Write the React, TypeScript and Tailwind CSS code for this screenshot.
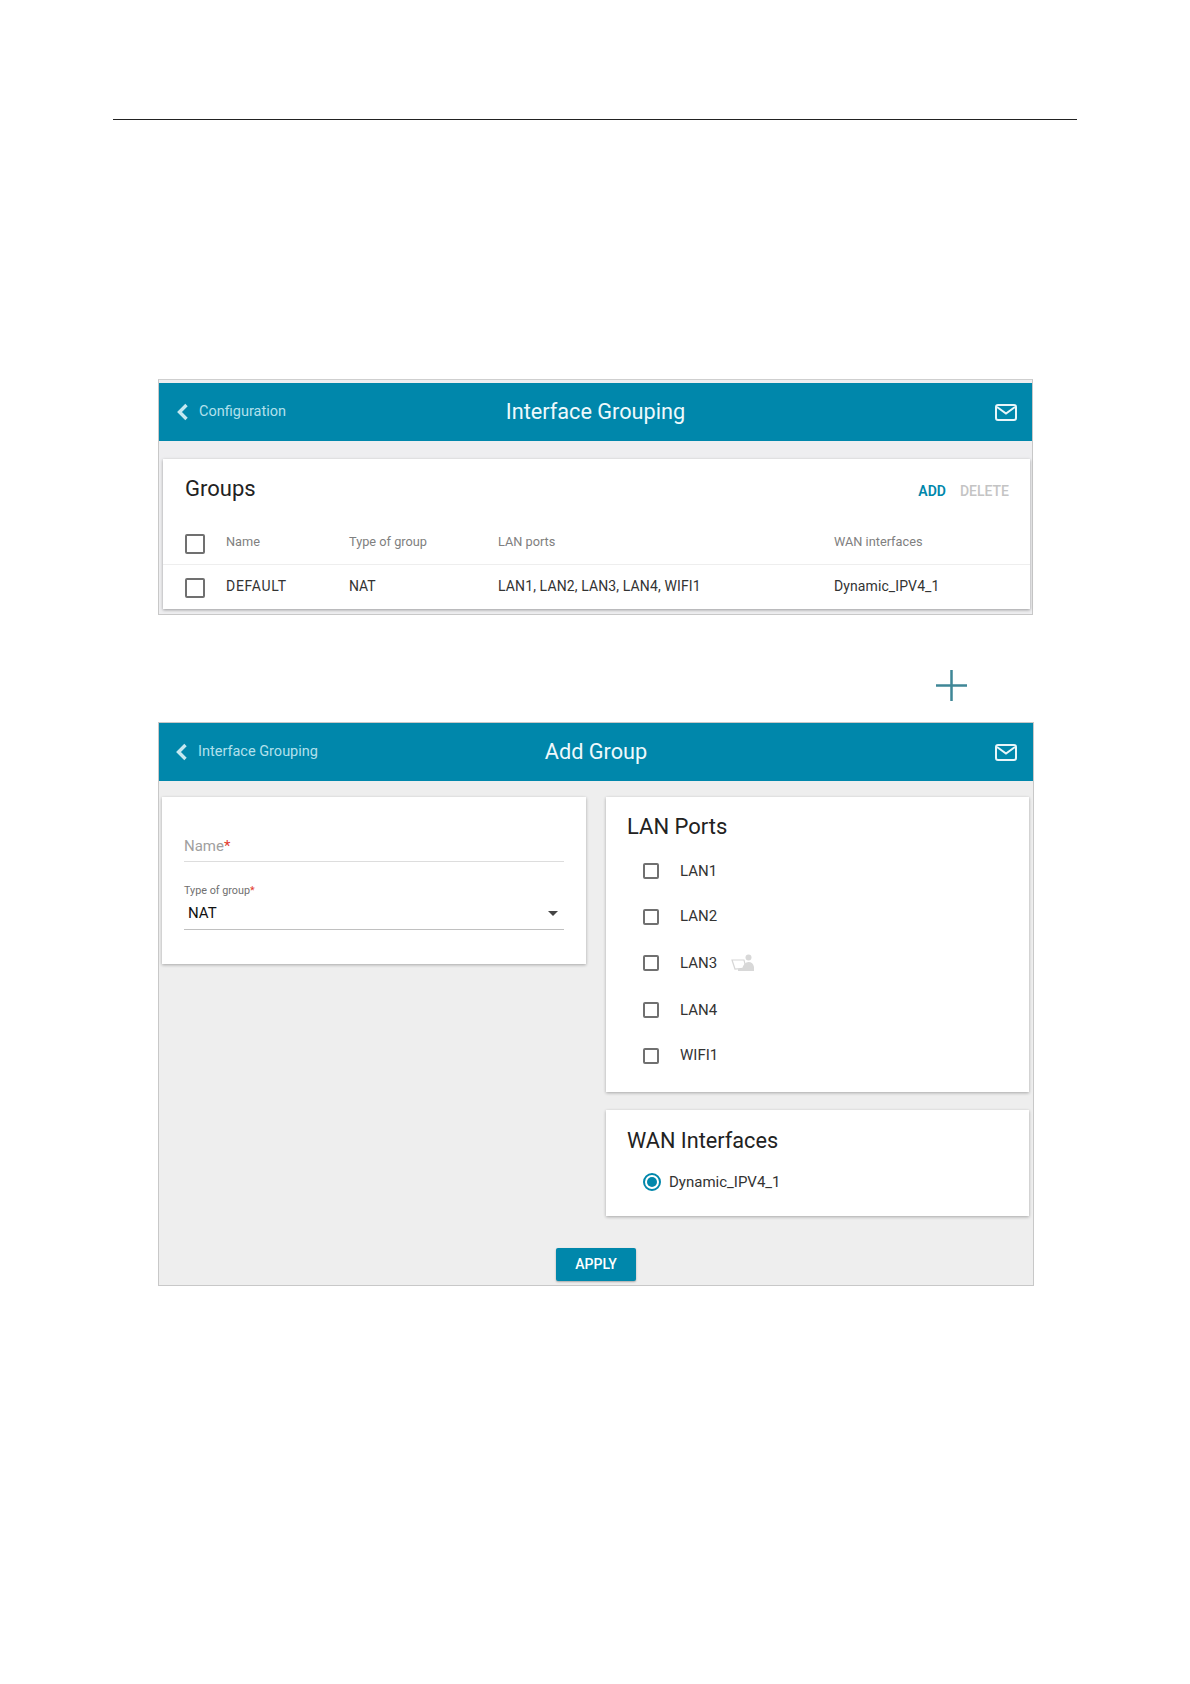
import React from "react";

const font = { fontFamily: "Roboto, 'Liberation Sans', sans-serif" };

function Chevron() {
  return (
    <svg width="13" height="18" viewBox="0 0 13 18" fill="none" className="shrink-0">
      <path d="M10.5 2 L3.5 9 L10.5 16" stroke="#c4e8f1" strokeWidth="3.4" />
    </svg>
  );
}

function Mail() {
  return (
    <svg width="22" height="17" viewBox="0 0 22 17" fill="none">
      <rect x="1" y="1" width="20" height="15" rx="2" stroke="#e8f6fa" strokeWidth="2" />
      <path d="M2 3 L11 9.5 L20 3" stroke="#e8f6fa" strokeWidth="2" />
    </svg>
  );
}

function Header({ back, title, pad }: { back: string; title: string; pad: string }) {
  return (
    <div className={`relative flex h-[58px] items-center justify-between bg-[#0087ab] ${pad}`}>
      <div className="flex items-center gap-[10px]">
        <Chevron />
        <span className="text-[14.5px] text-[#b2e0ec]">{back}</span>
      </div>
      <span className="absolute inset-x-0 text-center text-[21.7px] text-[#eef9fc]">{title}</span>
      <Mail />
    </div>
  );
}

function Box({ size = "w-5 h-5" }: { size?: string }) {
  return <span className={`block shrink-0 rounded-[2px] border-2 border-[#707070] bg-white ${size}`} />;
}

function Row({ className, boxClass, children }: { className: string; boxClass: string; children: React.ReactNode }) {
  return (
    <div className={`grid grid-cols-[22px_123px_149px_336px_1fr] items-center pl-[22px] ${className}`}>
      <span className={boxClass}>
        <Box />
      </span>
      {children}
    </div>
  );
}

function Port({ name, h, icon }: { name: string; h: string; icon?: boolean }) {
  return (
    <div className={`flex items-center pl-[37px] ${h}`}>
      <Box size="w-4 h-4" />
      <span className="ml-[21px] text-[15px] text-[#333]">{name}</span>
      {icon && (
        <svg width="23" height="18" viewBox="0 0 23 18" className="ml-[14px]" fill="none">
          <path d="M1 6 L13 6 L15 14 L4 15 Z" stroke="#d6d6d6" strokeWidth="1.2" />
          <circle cx="17.5" cy="3.5" r="3" fill="#d8d8d8" />
          <path d="M11 15 Q13 8 17.5 8 Q22 8 23 13 L23 17 L7 17 L7 15 Z" fill="#d8d8d8" />
        </svg>
      )}
    </div>
  );
}

export default function App() {
  return (
    <div className="min-h-[1684px] bg-white" style={font}>
      <div className="pt-[119px]">
        <div className="mx-[113px] h-px bg-[#222]" />
      </div>

      {/* Interface Grouping window */}
      <div className="ml-[158px] mt-[259px] h-[236px] w-[875px] border border-[#c8c8c8] border-t-[#cfcfcf] bg-[#eeeef0] pt-[3px]">
        <Header back="Configuration" title="Interface Grouping" pad="pl-[17px] pr-[15px]" />
        <div className="ml-[4px] mr-[2px] mt-[18px] h-[150px] bg-white shadow-[0_1px_3px_rgba(0,0,0,0.35)]">
          <div className="flex h-[61px] items-center justify-between pl-[22px] pr-[21px]">
            <span className="mb-[2px] text-[22px] text-[#222]">Groups</span>
            <div className="mt-[4px] flex gap-[14px] text-[14px] font-medium">
              <span className="font-semibold text-[#0087ab]">ADD</span>
              <span className="text-[#c4c4c4]">DELETE</span>
            </div>
          </div>
          <Row boxClass="mt-[4px]" className="h-[45px] border-b border-[#eeeeee] text-[12.75px] text-[#808080]">
            <span className="ml-[19px]">Name</span>
            <span className="ml-[19px]">Type of group</span>
            <span className="ml-[19px]">LAN ports</span>
            <span className="ml-[19px]">WAN interfaces</span>
          </Row>
          <Row boxClass="mt-[3px]" className="h-[43px] text-[14px] text-[#333]">
            <span className="ml-[19px] tracking-[0.7px]">DEFAULT</span>
            <span className="ml-[19px]">NAT</span>
            <span className="ml-[19px] tracking-[0.12px]">LAN1, LAN2, LAN3, LAN4, WIFI1</span>
            <span className="ml-[19px] tracking-[0.1px]">Dynamic_IPV4_1</span>
          </Row>
        </div>
      </div>

      {/* Plus */}
      <div className="ml-[936px] mt-[55px] h-[31px] w-[31px]">
        <svg width="31" height="31" viewBox="0 0 31 31">
          <path d="M0 15.5 H31 M15.5 0 V31" stroke="#3f8797" strokeWidth="2.5" />
        </svg>
      </div>

      {/* Add Group window */}
      <div className="ml-[158px] mt-[21px] h-[564px] w-[876px] border border-[#c8c8c8] bg-[#eeeeee]">
        <Header back="Interface Grouping" title="Add Group" pad="pl-[16px] pr-[16px]" />
        <div className="mt-[16px] flex items-start pl-[3px]">
          <div className="h-[167px] w-[424px] bg-white px-[22px] shadow-[0_1px_3px_rgba(0,0,0,0.3)]">
            <div className="flex h-[65px] items-end border-b border-[#dddddd] pb-[4px] text-[15px] text-[#a0a0a0]">
              <span>
                Name<span className="text-[#e23b2e]">*</span>
              </span>
            </div>
            <div className="mt-[22px] text-[10.8px] leading-[14px] text-[#707070]">
              Type of group<span className="text-[#e23b2e]">*</span>
            </div>
            <div className="flex h-[32px] items-center justify-between border-b border-[#c0c0c0] pl-[4px] pr-[6px] text-[15px] text-[#111]">
              <span>NAT</span>
              <span className="h-0 w-0 border-x-[5px] border-t-[5px] border-x-transparent border-t-[#444]" />
            </div>
          </div>
          <div className="ml-[20px] flex w-[423px] flex-col gap-[18px]">
            <div className="h-[295px] bg-white shadow-[0_1px_3px_rgba(0,0,0,0.3)]">
              <div className="pl-[21px] pt-[16px] text-[22px] leading-[28px] text-[#222]">LAN Ports</div>
              <div className="mt-[7px]">
                <Port name="LAN1" h="h-[46px]" />
                <Port name="LAN2" h="h-[45px]" />
                <Port name="LAN3" h="h-[48px]" icon />
                <Port name="LAN4" h="h-[46px]" />
                <Port name="WIFI1" h="h-[45px]" />
              </div>
            </div>
            <div className="h-[106px] bg-white shadow-[0_1px_3px_rgba(0,0,0,0.3)]">
              <div className="pl-[21px] pt-[17px] text-[21.7px] leading-[28px] text-[#222]">WAN Interfaces</div>
              <div className="mt-[16px] flex items-center pl-[37px]">
                <span className="flex h-[18px] w-[18px] items-center justify-center rounded-full border-2 border-[#0087ab]">
                  <span className="h-[10px] w-[10px] rounded-full bg-[#0087ab]" />
                </span>
                <span className="ml-[8px] text-[15px] text-[#333]">Dynamic_IPV4_1</span>
              </div>
            </div>
          </div>
        </div>
        <div className="mt-[32px] flex justify-center">
          <button className="h-[33px] w-[80px] rounded-[2px] bg-[#0087ab] text-[14px] font-medium text-white shadow-[0_1px_2px_rgba(0,0,0,0.3)]">
            APPLY
          </button>
        </div>
      </div>
    </div>
  );
}
